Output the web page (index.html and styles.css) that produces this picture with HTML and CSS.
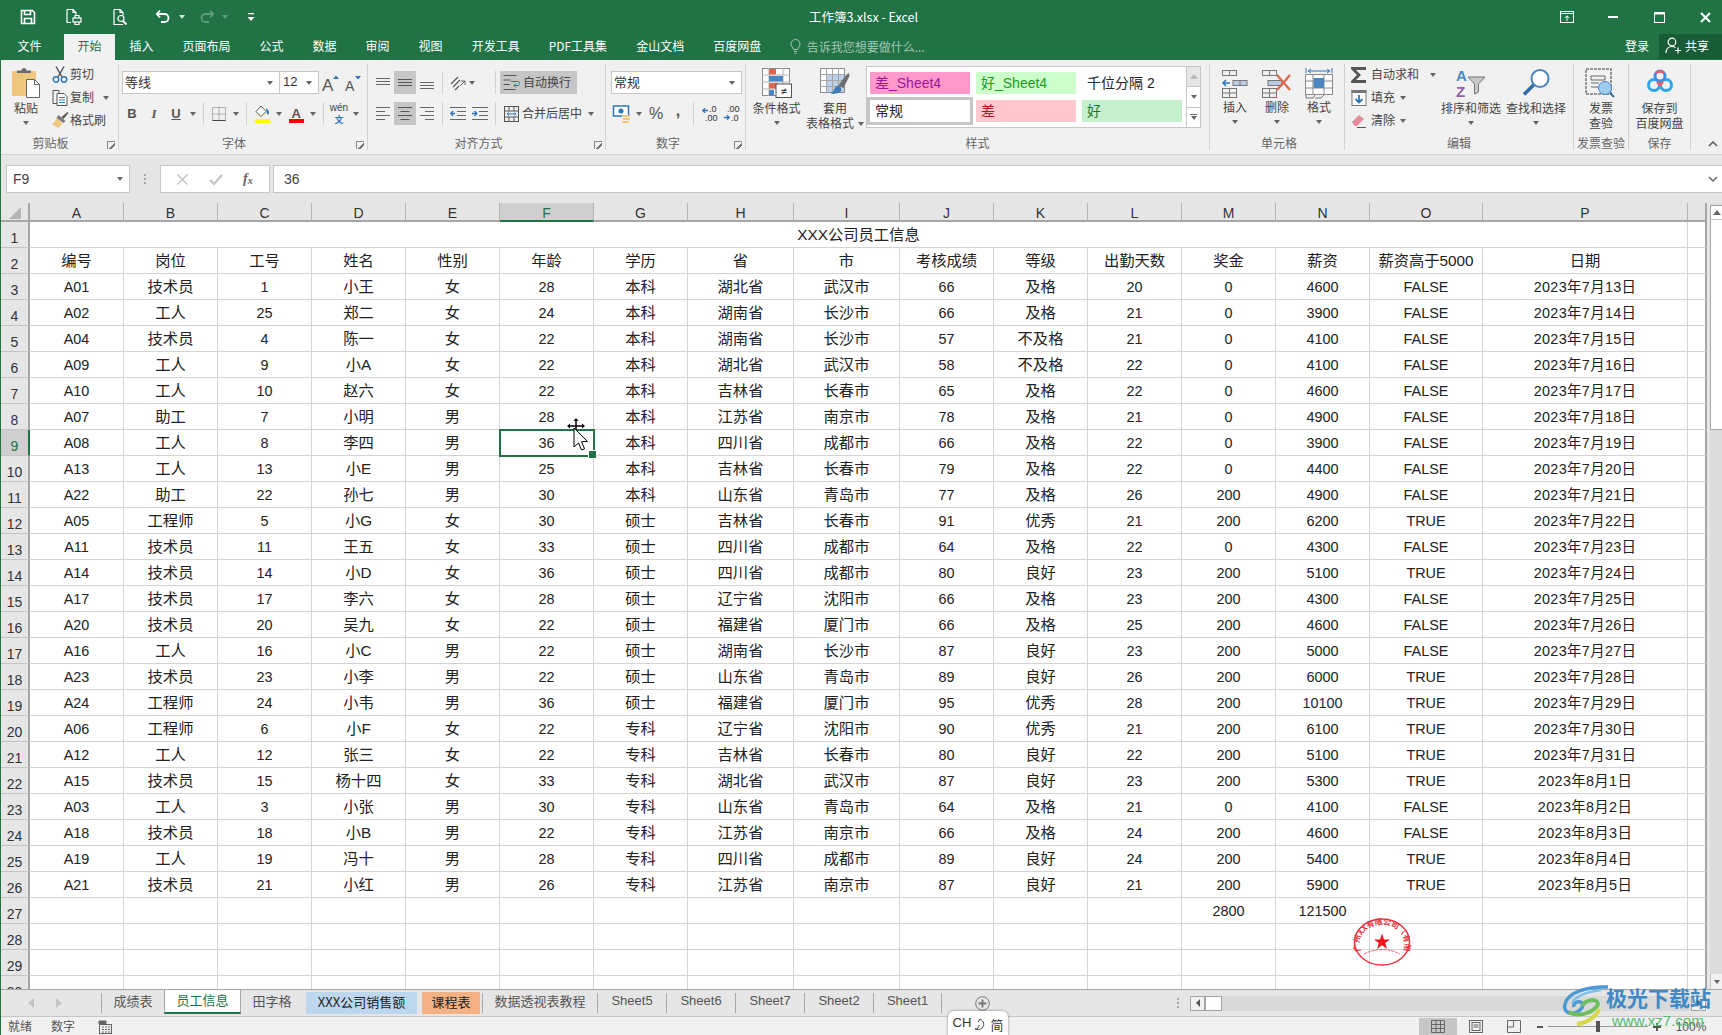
FILE: index.html
```html
<!DOCTYPE html>
<html lang="zh-CN">
<head>
<meta charset="utf-8">
<title>工作簿3.xlsx - Excel</title>
<link rel="stylesheet" href="styles.css">
</head>
<body>
<div class="app">

<header class="titlebar">
  <div class="qat">
    <span class="qb"><svg width="16" height="16" viewBox="0 0 16 16" fill="none" stroke="#fff" stroke-width="1.6"><path d="M1.5 1.5h11l2 2v11h-13z"/><path d="M4.5 1.5v4h6v-4M4.5 14.5v-5h7v5"/></svg></span>
    <span class="qb"><svg width="18" height="18" viewBox="0 0 18 18" fill="none" stroke="#fff" stroke-width="1.2"><path d="M2 1.5h6l3 3v3M2 1.5v13h4"/><path d="M8 1.5v3h3"/><rect x="8" y="10" width="8" height="4"/><path d="M10 10V7.500h4V10M10 14v2.500h4V14"/></svg></span>
    <span class="qb"><svg width="18" height="18" viewBox="0 0 18 18" fill="none" stroke="#fff" stroke-width="1.2"><path d="M3 1.500h6l3 3v3M3 1.500v15h9"/><path d="M9 1.500v3h3"/><circle cx="10" cy="10.500" r="3"/><path d="M12 13l3.500 3.500" stroke-width="1.800"/></svg></span>
    <span class="qb-undo"><svg width="16" height="16" viewBox="0 0 16 16" fill="none" stroke="#fff" stroke-width="1.800"><path d="M5 1.500L1.800 5 5 8.500"/><path d="M2 5h7.500a4 4 0 0 1 0 8H6"/></svg></span>
    <span class="caret caret-w"></span>
    <span class="qb-redo"><svg width="16" height="16" viewBox="0 0 16 16" fill="none" stroke="#5f9c7c" stroke-width="1.800"><path d="M11 1.500L14.200 5 11 8.500"/><path d="M14 5H6.500a4 4 0 0 0 0 8H10"/></svg></span>
    <span class="caret caret-dim"></span>
    <span class="qb-custom"><svg width="8" height="9" viewBox="0 0 8 9" fill="#fff"><rect x="1" y="0" width="6" height="1.300"/><path d="M0.500 4h7L4 8z"/></svg></span>
  </div>
  <div class="doc-title">工作簿3.xlsx - Excel</div>
  <div class="winctl">
    <span class="wb"><svg width="14" height="12" viewBox="0 0 14 12" fill="none" stroke="#fff"><rect x="0.500" y="0.500" width="13" height="11"/><path d="M0.500 2.500h13M7 10V5M4.800 7L7 4.800 9.200 7"/></svg></span>
    <span class="wb"><svg width="10" height="2" viewBox="0 0 10 2"><rect width="10" height="2" fill="#fff"/></svg></span>
    <span class="wb"><svg width="11" height="11" viewBox="0 0 11 11" fill="none" stroke="#fff"><rect x="0.500" y="0.500" width="10" height="10"/><path d="M0 1.500h11" stroke-width="2"/></svg></span>
    <span class="wb wb-close"><svg width="11" height="11" viewBox="0 0 11 11" stroke="#fff" stroke-width="2"><path d="M1 1l9 9M10 1l-9 9"/></svg></span>
  </div>
</header>

<nav class="menutabs">
  <span class="mt mt-file">文件</span>
  <span class="mt mt-on">开始</span>
  <span class="mt">插入</span>
  <span class="mt">页面布局</span>
  <span class="mt">公式</span>
  <span class="mt">数据</span>
  <span class="mt">审阅</span>
  <span class="mt">视图</span>
  <span class="mt">开发工具</span>
  <span class="mt">PDF工具集</span>
  <span class="mt">金山文档</span>
  <span class="mt">百度网盘</span>
  <span class="tellme"><svg width="11" height="15" viewBox="0 0 11 15" fill="none" stroke="#a8c8b6"><path d="M3.500 10.500C3 8.500 1 7.500 1 5a4.500 4.500 0 0 1 9 0c0 2.500-2 3.500-2.500 5.500zM4 12.500h3M4.500 14.300h2"/></svg>告诉我您想要做什么...</span>
  <span class="login">登录</span>
  <span class="share"><svg width="17" height="17" viewBox="0 0 17 17" fill="none" stroke="#fff" stroke-width="1.200"><circle cx="7" cy="5" r="3.800"/><path d="M1 16c0-4 2.500-6.500 6-6.500 1.500 0 2.500.4 3.500 1M10 13.500h6M13 10.500v6"/></svg>共享</span>
</nav>

<section class="ribbon">
  <div class="group g-clip">
    <div class="gbody">
      <div class="big big-paste">
        <svg class="bigicon" width="28" height="30" viewBox="0 0 28 30"><rect x="0" y="3" width="24" height="25" rx="1" fill="#f0c77f"/><path d="M5 5V2.500h4.500a2.500 2.500 0 0 1 5 0H19V5z" fill="#6b6b6b"/><path d="M14.500 11.500h8l5 5v13h-13z" fill="#fff" stroke="#666"/><path d="M22.500 11.500v5h5" fill="none" stroke="#666"/></svg>
        <span class="biglabel">粘贴</span>
        <span class="bigcaret"><span class="caret"></span></span>
      </div>
      <div class="smalls">
        <div class="sm"><svg class="smi" width="16" height="17" viewBox="0 0 16 17" fill="none"><path d="M4 0.500L10 11M12 0.500L6 11" stroke="#555" stroke-width="1.500"/><circle cx="4" cy="13.500" r="2.700" stroke="#2f75b5" stroke-width="1.400"/><circle cx="12" cy="13.500" r="2.700" stroke="#2f75b5" stroke-width="1.400"/></svg><span>剪切</span></div>
        <div class="sm"><svg class="smi" width="16" height="16" viewBox="0 0 16 16" fill="none" stroke="#555"><path d="M1 .5h6v13H1z"/><path d="M5 3.500h7l3 3v9H5z" fill="#fff"/><path d="M7 7.500h6M7 10h6M7 12.500h6" stroke="#2f75b5"/></svg><span>复制</span><span class="caret caret-sm"></span></div>
        <div class="sm"><svg class="smi" width="17" height="17" viewBox="0 0 17 17"><path d="M10 5l6-5 1 1-5 6z" fill="#595959"/><path d="M7 3l7 6-2 2-7-5z" fill="#7a7a7a"/><path d="M5 6l6 5-4 5-7-4c2 0 4-3 5-6z" fill="#f0c77f"/></svg><span>格式刷</span></div>
      </div>
    </div>
    <div class="glabel">剪贴板<span class="launch"></span></div>
  </div>

  <div class="group g-font">
    <div class="gbody rows">
      <div class="row">
        <span class="combo c-font">等线<span class="caret"></span></span>
        <span class="combo c-size">12<span class="caret"></span></span>
        <span class="ic"><svg width="22" height="20" viewBox="0 0 22 20"><text x="3" y="18" class="icontext">A</text><path d="M14 6l3-3.500L20 6z" fill="#2f75b5"/></svg></span>
        <span class="ic"><svg width="22" height="20" viewBox="0 0 22 20"><text x="4" y="18" class="icontext-s">A</text><path d="M14 3l3 3.500L20 3z" fill="#2f75b5"/></svg></span>
      </div>
      <div class="row row-tight">
        <span class="ic fmt fmt-b">B</span>
        <span class="ic fmt fmt-i">I</span>
        <span class="ic fmt fmt-u">U</span>
        <span class="car"><span class="caret"></span></span>
        <span class="sep"></span>
        <span class="ic"><svg width="14" height="14" viewBox="0 0 14 14" fill="none" stroke="#777" stroke-dasharray="1 1"><path d="M.5.500h13v13H.5zM7 .5v13M.5 7h13"/><path d="M.5 13.500h13" stroke="#444" stroke-dasharray="none"/></svg></span>
        <span class="car"><span class="caret"></span></span>
        <span class="sep"></span>
        <span class="ic"><svg width="17" height="18" viewBox="0 0 17 18"><path d="M7 1l5 5.500-5 5-5-5z" fill="#fff" stroke="#555"/><path d="M12 3c2 1 3 3 3 5 0 1-1 2-2 1z" fill="#2f75b5"/><rect x="1" y="14" width="15" height="4" fill="#ffff00"/></svg></span>
        <span class="car"><span class="caret"></span></span>
        <span class="ic"><svg width="17" height="18" viewBox="0 0 17 18"><text x="3.500" y="12.500" class="icontext-a">A</text><rect x="1" y="14" width="15" height="4" fill="#ff0000"/></svg></span>
        <span class="car"><span class="caret"></span></span>
        <span class="sep"></span>
        <span class="ic wen"><i>wén</i><b>文</b></span>
        <span class="car"><span class="caret"></span></span>
      </div>
    </div>
    <div class="glabel">字体<span class="launch"></span></div>
  </div>

  <div class="group g-align">
    <div class="gbody rows">
      <div class="row">
        <span class="ic"><svg width="14" height="10" viewBox="0 0 14 10" stroke="#666"><path d="M0 .5h14M0 3.500h14M0 6.500h14"/></svg></span>
        <span class="ic ic-on"><svg width="14" height="8" viewBox="0 0 14 8" stroke="#555"><path d="M0 .5h14M0 3.500h14M0 6.500h14"/></svg></span>
        <span class="ic"><svg class="down4" width="14" height="8" viewBox="0 0 14 8" stroke="#666"><path d="M0 .5h14M0 3.500h14M0 6.500h14"/></svg></span>
        <span class="sep"></span>
        <span class="ic2"><svg width="16" height="16" viewBox="0 0 16 16" fill="none" stroke="#555"><path d="M1 9l7-7M3 12l7-7M5 15l4-4" stroke-width="1.200"/><path d="M10 11l5-5M15 6v4M15 6h-4" stroke="#666"/></svg><span class="caret"></span></span>
        <span class="sep"></span>
        <span class="wrap-btn"><svg width="17" height="18" viewBox="0 0 17 18" fill="none" stroke="#555"><path d="M.5 1.500h13M.5 6h7M.5 10.500h6M.5 15.500h12"/><path d="M8 7.500h7c2 0 2 4 0 4h-4M13 9.500l-2 2 2 2" stroke="#2f75b5"/></svg><span class="raise">自动换行</span></span>
      </div>
      <div class="row">
        <span class="ic"><svg width="14" height="13" viewBox="0 0 14 13" stroke="#666"><path d="M0 .5h14M0 4.500h9M0 8.500h14M0 12.500h9"/></svg></span>
        <span class="ic ic-on"><svg width="14" height="13" viewBox="0 0 14 13" stroke="#555"><path d="M0 .5h14M2.500 4.500h9M0 8.500h14M2.500 12.500h9"/></svg></span>
        <span class="ic"><svg width="14" height="13" viewBox="0 0 14 13" stroke="#666"><path d="M0 .5h14M5 4.500h9M0 8.500h14M5 12.500h9"/></svg></span>
        <span class="sep"></span>
        <span class="ic"><svg width="16" height="13" viewBox="0 0 16 13" fill="none" stroke="#666"><path d="M0 .5h16M7 4.500h9M7 8.500h9M0 12.500h16"/><path d="M5 6.500H1M3 4L.8 6.500 3 9" stroke="#2f75b5" stroke-width="1.300"/></svg></span>
        <span class="ic"><svg width="16" height="13" viewBox="0 0 16 13" fill="none" stroke="#666"><path d="M0 .5h16M7 4.500h9M7 8.500h9M0 12.500h16"/><path d="M0 6.500h4M2.500 4L4.800 6.500 2.500 9" stroke="#2f75b5" stroke-width="1.300"/></svg></span>
        <span class="sep"></span>
        <span class="merge"><svg width="15" height="16" viewBox="0 0 15 16" fill="none" stroke="#555"><rect x=".5" y=".5" width="14" height="15"/><path d="M.5 5h14M.5 11h14M5 .5V5M10 .5V5M5 11v5M10 11v5"/><path d="M3 8h9M4.500 6.500L3 8l1.500 1.500M10.500 6.500L12 8l-1.500 1.500" stroke="#2f75b5"/></svg><span class="merge-t raise">合并后居中</span><span class="caret"></span></span>
      </div>
    </div>
    <div class="glabel">对齐方式<span class="launch"></span></div>
  </div>

  <div class="group g-num">
    <div class="gbody rows">
      <div class="row"><span class="combo c-num">常规<span class="caret"></span></span></div>
      <div class="row">
        <span class="ic"><svg width="18" height="18" viewBox="0 0 18 18"><rect x="0.500" y="1" width="15" height="10" fill="#fff" stroke="#2f75b5" stroke-width="1.500"/><circle cx="8" cy="6" r="2.500" fill="#2f75b5"/><rect x="9" y="10" width="7" height="2" fill="#f0c77f"/><rect x="10" y="13" width="7" height="2" fill="#f0c77f"/><rect x="9" y="16" width="7" height="2" fill="#f0c77f"/></svg></span>
        <span class="car"><span class="caret"></span></span>
        <span class="ic pct">%</span>
        <span class="ic pct comma">,</span>
        <span class="sep"></span>
        <span class="ic decs"><svg width="15" height="14" viewBox="0 0 15 14" fill="none"><path d="M6 3.500H1M3 1.300L.8 3.500 3 5.700" stroke="#2f75b5" stroke-width="1.300"/></svg><i class="dec1">.0</i><i class="dec2">.00</i></span>
        <span class="ic decs"><svg width="15" height="14" viewBox="0 0 15 14" fill="none"><path d="M0 10.500h5M3 8.300l2.200 2.200L3 12.700" stroke="#2f75b5" stroke-width="1.300"/></svg><i class="dec3">.00</i><i class="dec4">.0</i></span>
      </div>
    </div>
    <div class="glabel">数字<span class="launch"></span></div>
  </div>

  <div class="group g-style">
    <div class="gbody">
      <div class="big big-cf">
        <svg class="bigicon" width="30" height="30" viewBox="0 0 30 30"><rect x=".5" y=".5" width="27" height="27" fill="#fff" stroke="#8a8a8a"/><path d="M0 7h28M0 14h28M0 21h28M7 0v28M21 0v28" stroke="#b5b5b5"/><rect x="7" y="1" width="7" height="5.500" fill="#d9694a"/><rect x="7" y="8" width="14" height="5.500" fill="#4a86c0"/><rect x="7" y="15" width="9" height="5.500" fill="#d9694a"/><rect x="7" y="22" width="5" height="5.500" fill="#4a86c0"/><rect x="14" y="16" width="15.500" height="13.500" fill="#fff" stroke="#555"/><text x="21.800" y="26.500" class="neq">≠</text></svg>
        <span class="biglabel">条件格式</span>
        <span class="bigcaret"><span class="caret"></span></span>
      </div>
      <div class="big big-tf">
        <svg class="bigicon" width="30" height="30" viewBox="0 0 30 30"><rect x=".5" y=".5" width="24" height="24" fill="#fff" stroke="#8a8a8a"/><rect x="7" y="7" width="17" height="17" fill="#bcd1e8"/><path d="M0 6.500h25M0 12.500h25M0 18.500h25M6.500 0v25M12.500 0v25M18.500 0v25" stroke="#a5a5a5"/><path d="M18 18l8-11 3-2 .5 3-6 12z" fill="#6e6e6e"/><path d="M17 18c3 0 5 2 4 5-1 2-5 3-10 3 3-2 3-7 6-8z" fill="#3c7cb8"/></svg>
        <span class="biglabel">套用<br>表格格式<span class="caret inl"></span></span>
      </div>
      <div class="gallery">
        <div class="gcells">
          <span class="st st-pink">差_Sheet4</span>
          <span class="st st-lgreen">好_Sheet4</span>
          <span class="st st-plain">千位分隔 2</span>
          <span class="st st-norm">常规</span>
          <span class="st st-bad">差</span>
          <span class="st st-good">好</span>
        </div>
        <div class="gscroll">
          <span class="gs gs-dim"><i class="up"></i></span>
          <span class="gs"><span class="caret"></span></span>
          <span class="gs gs-more"><span class="caret"></span></span>
        </div>
      </div>
    </div>
    <div class="glabel">样式</div>
  </div>

  <div class="group g-cells">
    <div class="gbody">
      <div class="big big-c">
        <svg class="bigicon" width="28" height="30" viewBox="0 0 28 30" fill="none" stroke="#777"><rect x="1.500" y="2.500" width="14" height="5"/><path d="M8.500 2.500v5"/><rect x="12" y="12.500" width="14" height="5" fill="#b8cce4"/><path d="M19 12.500v5"/><path d="M9 15H2M5 12l-3 3 3 3" stroke="#2f75b5" stroke-width="1.500"/><rect x="1.500" y="20.500" width="14" height="9"/><path d="M8.500 20.500v9M1.500 25h14"/></svg>
        <span class="biglabel">插入</span>
        <span class="bigcaret"><span class="caret"></span></span>
      </div>
      <div class="big big-c">
        <svg class="bigicon" width="32" height="30" viewBox="0 0 32 30" fill="none" stroke="#777"><rect x="1.500" y="2.500" width="14" height="5"/><path d="M8.500 2.500v5"/><rect x="7" y="12.500" width="14" height="5" fill="#b8cce4"/><rect x="1.500" y="20.500" width="14" height="9"/><path d="M8.500 20.500v9M1.500 25h14"/><path d="M16 7l13 15M29 7L16 22" stroke="#d9694a" stroke-width="2.200"/></svg>
        <span class="biglabel">删除</span>
        <span class="bigcaret"><span class="caret"></span></span>
      </div>
      <div class="big big-c">
        <svg class="bigicon" width="28" height="30" viewBox="0 0 28 30" fill="none" stroke="#8a8a8a"><path d="M1 0v5M27 0v5" stroke="#2f75b5"/><path d="M3 3h22M6 1L3 3l3 2M22 1l3 2-3 2" stroke="#2f75b5"/><rect x=".5" y="6.500" width="27" height="20" fill="#fff"/><path d="M0 13h28M0 20h28M8 6v21M19 6v21"/><rect x="8.500" y="10" width="10.500" height="10" fill="#4a86c0" stroke="none"/><path d="M1 27v3h7l2-3M10 30h6l3-3" stroke="#777"/></svg>
        <span class="biglabel">格式</span>
        <span class="bigcaret"><span class="caret"></span></span>
      </div>
    </div>
    <div class="glabel">单元格</div>
  </div>

  <div class="group g-edit">
    <div class="gbody">
      <div class="smalls smalls-edit">
        <div class="sm"><svg class="smi2" width="16" height="16" viewBox="0 0 16 16"><path d="M0 0h15v3H5l5 5-5 5h10v3H0v-2l6-6-6-6z" fill="#555"/></svg><span>自动求和</span><span class="caret caret-e1"></span></div>
        <div class="sm"><svg class="smi2" width="15" height="16" viewBox="0 0 15 16" fill="none"><rect x=".5" y=".5" width="14" height="15" fill="#fff" stroke="#777"/><rect x="0" y="0" width="15" height="3" fill="#777"/><path d="M7.500 5v7M4 9l3.500 3.500L11 9" stroke="#2f75b5" stroke-width="1.800"/></svg><span>填充</span><span class="caret caret-e2"></span></div>
        <div class="sm"><svg class="smi2" width="16" height="14" viewBox="0 0 16 14"><path d="M1 8l7-7 5 4-7 7H3.500z" fill="#e58a9b"/><path d="M6 13.500h9" stroke="#555" fill="none"/></svg><span>清除</span><span class="caret caret-e2"></span></div>
      </div>
      <div class="big big-sort">
        <svg class="bigicon" width="30" height="30" viewBox="0 0 30 30"><text x="0" y="13" class="az az-a">A</text><text x="0" y="29" class="az az-z">Z</text><path d="M12 9h17l-6.500 7v8l-4 2V16z" fill="#c9c9c9" stroke="#777"/></svg>
        <span class="biglabel">排序和筛选</span>
        <span class="bigcaret"><span class="caret"></span></span>
      </div>
      <div class="big big-find">
        <svg class="bigicon" width="28" height="30" viewBox="0 0 28 30" fill="none"><circle cx="18" cy="10.500" r="8.500" fill="#fff" stroke="#4a86c0" stroke-width="2"/><path d="M11.500 17L2 26.500" stroke="#2f6ca8" stroke-width="3.500"/></svg>
        <span class="biglabel">查找和选择</span>
        <span class="bigcaret"><span class="caret"></span></span>
      </div>
    </div>
    <div class="glabel">编辑</div>
  </div>

  <div class="group g-inv">
    <div class="gbody">
      <div class="big big-inv">
        <svg class="bigicon" width="32" height="30" viewBox="0 0 32 30" fill="none"><rect x="1" y="1" width="25" height="25" fill="#f3f3f3" stroke="#777" stroke-width="1.500" stroke-dasharray="3 1"/><path d="M6 8h14v4H6zM6 15h8M6 19h7" stroke="#666"/><circle cx="20" cy="20" r="6.500" fill="#9ecbf0" stroke="#4a86c0"/><path d="M25 25l4 4" stroke="#2f6ca8" stroke-width="2"/></svg>
        <span class="biglabel">发票<br>查验</span>
      </div>
    </div>
    <div class="glabel">发票查验</div>
  </div>

  <div class="group g-save">
    <div class="gbody">
      <div class="big big-save">
        <svg class="bigicon" width="28" height="30" viewBox="0 0 28 30" fill="none"><circle cx="8" cy="17" r="5.500" stroke="#2fa4e7" stroke-width="3"/><circle cx="20" cy="17" r="5.500" stroke="#2fa4e7" stroke-width="3"/><circle cx="14" cy="8" r="5" stroke="#3d8fe0" stroke-width="3"/><path d="M10 5a6 6 0 0 1 8 0" stroke="#ee5a6f" stroke-width="3"/><path d="M11 14l3 3 3-3" stroke="#ee5a6f" stroke-width="2.500"/></svg>
        <span class="biglabel">保存到<br>百度网盘</span>
      </div>
    </div>
    <div class="glabel">保存</div>
  </div>

  <svg class="collapse" width="10" height="6" viewBox="0 0 10 6" fill="none" stroke="#555" stroke-width="1.500"><path d="M1 5l4-4 4 4"/></svg>
</section>

<section class="fbar">
  <div class="namebox">F9<span class="caret"></span></div>
  <div class="dots"><i></i><i></i><i></i></div>
  <div class="fxbox">
    <svg width="11" height="11" viewBox="0 0 11 11" stroke="#c4c4c4" stroke-width="1.500"><path d="M.5.5l10 10M10.500.5l-10 10"/></svg>
    <svg width="14" height="11" viewBox="0 0 14 11" fill="none" stroke="#c4c4c4" stroke-width="2.200"><path d="M1 6l4 4 8-9"/></svg>
    <span class="fx">f<sub>x</sub></span>
  </div>
  <div class="finput">36<svg class="fexpand" width="10" height="6" viewBox="0 0 10 6" fill="none" stroke="#666" stroke-width="1.500"><path d="M1 1l4 4 4-4"/></svg></div>
</section>

<section class="sheet">
  <div class="gridwrap">
    <table class="grid">
      <colgroup><col class="c-rh"><col class="c94" span="7"><col class="c106" span="2"><col class="c94" span="5"><col class="c113"><col class="c205"><col class="c-end"></colgroup>
      <thead><tr><th class="corner"><svg width="14" height="14" viewBox="0 0 14 14"><path d="M13 1v12H1z" fill="#b4b4b4"/></svg></th><th>A</th><th>B</th><th>C</th><th>D</th><th>E</th><th class="col-on">F</th><th>G</th><th>H</th><th>I</th><th>J</th><th>K</th><th>L</th><th>M</th><th>N</th><th>O</th><th>P</th><th></th></tr></thead>
      <tbody>
<tr><th>1</th><td colspan="16">XXX公司员工信息</td><td></td></tr>
<tr><th>2</th><td>编号</td><td>岗位</td><td>工号</td><td>姓名</td><td>性别</td><td>年龄</td><td>学历</td><td>省</td><td>市</td><td>考核成绩</td><td>等级</td><td>出勤天数</td><td>奖金</td><td>薪资</td><td>薪资高于5000</td><td>日期</td><td></td></tr>
<tr><th>3</th><td>A01</td><td>技术员</td><td>1</td><td>小王</td><td>女</td><td>28</td><td>本科</td><td>湖北省</td><td>武汉市</td><td>66</td><td>及格</td><td>20</td><td>0</td><td>4600</td><td>FALSE</td><td class="date">2023年7月13日</td><td></td></tr>
<tr><th>4</th><td>A02</td><td>工人</td><td>25</td><td>郑二</td><td>女</td><td>24</td><td>本科</td><td>湖南省</td><td>长沙市</td><td>66</td><td>及格</td><td>21</td><td>0</td><td>3900</td><td>FALSE</td><td class="date">2023年7月14日</td><td></td></tr>
<tr><th>5</th><td>A04</td><td>技术员</td><td>4</td><td>陈一</td><td>女</td><td>22</td><td>本科</td><td>湖南省</td><td>长沙市</td><td>57</td><td>不及格</td><td>21</td><td>0</td><td>4100</td><td>FALSE</td><td class="date">2023年7月15日</td><td></td></tr>
<tr><th>6</th><td>A09</td><td>工人</td><td>9</td><td>小A</td><td>女</td><td>22</td><td>本科</td><td>湖北省</td><td>武汉市</td><td>58</td><td>不及格</td><td>22</td><td>0</td><td>4100</td><td>FALSE</td><td class="date">2023年7月16日</td><td></td></tr>
<tr><th>7</th><td>A10</td><td>工人</td><td>10</td><td>赵六</td><td>女</td><td>22</td><td>本科</td><td>吉林省</td><td>长春市</td><td>65</td><td>及格</td><td>22</td><td>0</td><td>4600</td><td>FALSE</td><td class="date">2023年7月17日</td><td></td></tr>
<tr><th>8</th><td>A07</td><td>助工</td><td>7</td><td>小明</td><td>男</td><td>28</td><td>本科</td><td>江苏省</td><td>南京市</td><td>78</td><td>及格</td><td>21</td><td>0</td><td>4900</td><td>FALSE</td><td class="date">2023年7月18日</td><td></td></tr>
<tr><th class="row-on">9</th><td>A08</td><td>工人</td><td>8</td><td>李四</td><td>男</td><td class="sel">36</td><td>本科</td><td>四川省</td><td>成都市</td><td>66</td><td>及格</td><td>22</td><td>0</td><td>3900</td><td>FALSE</td><td class="date">2023年7月19日</td><td></td></tr>
<tr><th>10</th><td>A13</td><td>工人</td><td>13</td><td>小E</td><td>男</td><td>25</td><td>本科</td><td>吉林省</td><td>长春市</td><td>79</td><td>及格</td><td>22</td><td>0</td><td>4400</td><td>FALSE</td><td class="date">2023年7月20日</td><td></td></tr>
<tr><th>11</th><td>A22</td><td>助工</td><td>22</td><td>孙七</td><td>男</td><td>30</td><td>本科</td><td>山东省</td><td>青岛市</td><td>77</td><td>及格</td><td>26</td><td>200</td><td>4900</td><td>FALSE</td><td class="date">2023年7月21日</td><td></td></tr>
<tr><th>12</th><td>A05</td><td>工程师</td><td>5</td><td>小G</td><td>女</td><td>30</td><td>硕士</td><td>吉林省</td><td>长春市</td><td>91</td><td>优秀</td><td>21</td><td>200</td><td>6200</td><td>TRUE</td><td class="date">2023年7月22日</td><td></td></tr>
<tr><th>13</th><td>A11</td><td>技术员</td><td>11</td><td>王五</td><td>女</td><td>33</td><td>硕士</td><td>四川省</td><td>成都市</td><td>64</td><td>及格</td><td>22</td><td>0</td><td>4300</td><td>FALSE</td><td class="date">2023年7月23日</td><td></td></tr>
<tr><th>14</th><td>A14</td><td>技术员</td><td>14</td><td>小D</td><td>女</td><td>36</td><td>硕士</td><td>四川省</td><td>成都市</td><td>80</td><td>良好</td><td>23</td><td>200</td><td>5100</td><td>TRUE</td><td class="date">2023年7月24日</td><td></td></tr>
<tr><th>15</th><td>A17</td><td>技术员</td><td>17</td><td>李六</td><td>女</td><td>28</td><td>硕士</td><td>辽宁省</td><td>沈阳市</td><td>66</td><td>及格</td><td>23</td><td>200</td><td>4300</td><td>FALSE</td><td class="date">2023年7月25日</td><td></td></tr>
<tr><th>16</th><td>A20</td><td>技术员</td><td>20</td><td>吴九</td><td>女</td><td>22</td><td>硕士</td><td>福建省</td><td>厦门市</td><td>66</td><td>及格</td><td>25</td><td>200</td><td>4600</td><td>FALSE</td><td class="date">2023年7月26日</td><td></td></tr>
<tr><th>17</th><td>A16</td><td>工人</td><td>16</td><td>小C</td><td>男</td><td>22</td><td>硕士</td><td>湖南省</td><td>长沙市</td><td>87</td><td>良好</td><td>23</td><td>200</td><td>5000</td><td>FALSE</td><td class="date">2023年7月27日</td><td></td></tr>
<tr><th>18</th><td>A23</td><td>技术员</td><td>23</td><td>小李</td><td>男</td><td>22</td><td>硕士</td><td>山东省</td><td>青岛市</td><td>89</td><td>良好</td><td>26</td><td>200</td><td>6000</td><td>TRUE</td><td class="date">2023年7月28日</td><td></td></tr>
<tr><th>19</th><td>A24</td><td>工程师</td><td>24</td><td>小韦</td><td>男</td><td>36</td><td>硕士</td><td>福建省</td><td>厦门市</td><td>95</td><td>优秀</td><td>28</td><td>200</td><td>10100</td><td>TRUE</td><td class="date">2023年7月29日</td><td></td></tr>
<tr><th>20</th><td>A06</td><td>工程师</td><td>6</td><td>小F</td><td>女</td><td>22</td><td>专科</td><td>辽宁省</td><td>沈阳市</td><td>90</td><td>优秀</td><td>21</td><td>200</td><td>6100</td><td>TRUE</td><td class="date">2023年7月30日</td><td></td></tr>
<tr><th>21</th><td>A12</td><td>工人</td><td>12</td><td>张三</td><td>女</td><td>22</td><td>专科</td><td>吉林省</td><td>长春市</td><td>80</td><td>良好</td><td>22</td><td>200</td><td>5100</td><td>TRUE</td><td class="date">2023年7月31日</td><td></td></tr>
<tr><th>22</th><td>A15</td><td>技术员</td><td>15</td><td>杨十四</td><td>女</td><td>33</td><td>专科</td><td>湖北省</td><td>武汉市</td><td>87</td><td>良好</td><td>23</td><td>200</td><td>5300</td><td>TRUE</td><td class="date">2023年8月1日</td><td></td></tr>
<tr><th>23</th><td>A03</td><td>工人</td><td>3</td><td>小张</td><td>男</td><td>30</td><td>专科</td><td>山东省</td><td>青岛市</td><td>64</td><td>及格</td><td>21</td><td>0</td><td>4100</td><td>FALSE</td><td class="date">2023年8月2日</td><td></td></tr>
<tr><th>24</th><td>A18</td><td>技术员</td><td>18</td><td>小B</td><td>男</td><td>22</td><td>专科</td><td>江苏省</td><td>南京市</td><td>66</td><td>及格</td><td>24</td><td>200</td><td>4600</td><td>FALSE</td><td class="date">2023年8月3日</td><td></td></tr>
<tr><th>25</th><td>A19</td><td>工人</td><td>19</td><td>冯十</td><td>男</td><td>28</td><td>专科</td><td>四川省</td><td>成都市</td><td>89</td><td>良好</td><td>24</td><td>200</td><td>5400</td><td>TRUE</td><td class="date">2023年8月4日</td><td></td></tr>
<tr><th>26</th><td>A21</td><td>技术员</td><td>21</td><td>小红</td><td>男</td><td>26</td><td>专科</td><td>江苏省</td><td>南京市</td><td>87</td><td>良好</td><td>21</td><td>200</td><td>5900</td><td>TRUE</td><td class="date">2023年8月5日</td><td></td></tr>
<tr><th>27</th><td></td><td></td><td></td><td></td><td></td><td></td><td></td><td></td><td></td><td></td><td></td><td></td><td>2800</td><td>121500</td><td></td><td></td><td></td></tr>
<tr><th>28</th><td></td><td></td><td></td><td></td><td></td><td></td><td></td><td></td><td></td><td></td><td></td><td></td><td></td><td></td><td></td><td></td><td></td></tr>
<tr><th>29</th><td></td><td></td><td></td><td></td><td></td><td></td><td></td><td></td><td></td><td></td><td></td><td></td><td></td><td></td><td></td><td></td><td></td></tr>
<tr><th>30</th><td></td><td></td><td></td><td></td><td></td><td></td><td></td><td></td><td></td><td></td><td></td><td></td><td></td><td></td><td></td><td></td><td></td></tr>
      </tbody>
    </table>
  </div>
  <div class="vscroll">
    <span class="vbtn"><i class="up"></i></span>
    <span class="vthumb"></span>
    <span class="vtrack"></span>
    <span class="vbtn vbtn-b"><span class="caret"></span></span>
  </div>

  <svg class="stamp" width="58" height="50" viewBox="0 0 58 50">
    <defs><path id="arc" d="M8 34A22.500 19.500 0 1 1 50 34"/></defs>
    <ellipse cx="29" cy="25" rx="27.500" ry="23" fill="none" stroke="#f03040" stroke-width="1.500"/>
    <text class="stamp-t"><textPath href="#arc" startOffset="0">广州XX有限公司（有限合伙）</textPath></text>
    <path d="M29 16.500l2 5.900h6.100l-4.900 3.600 1.800 5.900-5-3.600-5 3.600 1.800-5.900-4.900-3.600h6.100z" fill="#f5141e"/>
    <path d="M11 37q18-9 36 0" fill="none" stroke="#f03040" stroke-width=".8" stroke-dasharray="3 1"/>
  </svg>

  <svg class="cursor" width="24" height="34" viewBox="0 0 24 34">
    <path d="M12 1v14M5 8h14" stroke="#000" stroke-width="1.500"/>
    <path d="M12 0l2.500 3h-5zM12 16l-2.500-3h5zM3 8l3-2.500v5zM21 8l-3-2.500v5z" fill="#000"/>
    <path d="M10 10v19l4.500-4 3 7 3-1.300-3-7 6-.3z" fill="#fff" stroke="#000"/>
  </svg>
</section>

<section class="sheetbar">
  <div class="nav">
    <svg width="6" height="10" viewBox="0 0 6 10"><path d="M6 0v10L0 5z" fill="#c4c4c4"/></svg>
    <svg width="6" height="10" viewBox="0 0 6 10"><path d="M0 0v10l6-5z" fill="#c4c4c4"/></svg>
  </div>
  <span class="tab">成绩表</span>
  <span class="tab tab-on">员工信息</span>
  <span class="tab">田字格</span>
  <span class="tab tab-blue">XXX公司销售额</span>
  <span class="tab tab-orange">课程表</span>
  <span class="tab">数据透视表教程</span>
  <span class="tab tab-s">Sheet5</span>
  <span class="tab tab-s">Sheet6</span>
  <span class="tab tab-s">Sheet7</span>
  <span class="tab tab-s">Sheet2</span>
  <span class="tab tab-s">Sheet1</span>
  <svg class="addsheet" width="15" height="15" viewBox="0 0 15 15" fill="none" stroke="#777"><circle cx="7.500" cy="7.500" r="6.800"/><path d="M7.500 3.500v8M3.500 7.500h8" stroke-width="1.800"/></svg>
  <div class="hscroll">
    <div class="dots dots-h"><i></i><i></i><i></i></div>
    <span class="hbtn"><i class="left"></i></span>
    <span class="hthumb"></span>
    <span class="htrack"></span>
    <span class="hbtn"><i class="right"></i></span>
  </div>
</section>

<footer class="status">
  <span class="st-txt">就绪</span>
  <span class="st-txt">数字</span>
  <svg class="st-ico" width="13" height="14" viewBox="0 0 13 14" fill="none" stroke="#666"><path d="M0 1h7v3H0z" fill="#666"/><rect x=".5" y="4.500" width="12" height="9"/><path d="M3 7h8M3 9.500h8M3 12h8" stroke-dasharray="2 1"/></svg>
  <div class="st-right">
    <span class="view view-on"><svg width="14" height="13" viewBox="0 0 14 13" fill="none" stroke="#666"><path d="M.5.500h13v12H.5zM.5 4.500h13M.5 8.500h13M5 .5v12M9.500.5v12"/></svg></span>
    <span class="view"><svg width="14" height="13" viewBox="0 0 14 13" fill="none" stroke="#666"><rect x=".5" y=".5" width="13" height="12"/><rect x="3" y="2.500" width="8" height="8"/><path d="M4.500 5h5M4.500 7h5"/></svg></span>
    <span class="view"><svg width="14" height="13" viewBox="0 0 14 13" fill="none" stroke="#666"><path d="M.5.500h13v12H.5zM.5 7h6V.5"/></svg></span>
    <span class="zminus"></span>
    <span class="slider"><i class="sthumb"></i></span>
    <span class="zplus"></span>
    <span class="zpct">100%</span>
  </div>
</footer>

<div class="ime">CH<svg width="13" height="13" viewBox="0 0 13 13" fill="none" stroke="#444"><path d="M6 1c4 2 5 6 2 9-2 2-5 2-7 1 3 0 4-2 4-4M4 4l2-3"/></svg>简</div>

<div class="watermark">
  <svg width="46" height="40" viewBox="0 0 46 40" fill="none">
    <path d="M45 1C25 0 5 6 2 18c-2 8 5 11 12 8 6-3 8-9 3-10-4-1-7 2-6 5" stroke="#4a9ad4" stroke-width="3.500"/>
    <path d="M38 4C24 6 12 10 9 17" stroke="#7fc0e8" stroke-width="2.500"/>
    <path d="M6 26c8 5 22 2 28-6 2-3 0-6-5-6-5 1-9 3-10 6" stroke="#6fbf60" stroke-width="4"/>
    <path d="M14 38c10-1 20-8 22-15" stroke="#d8d84a" stroke-width="4"/>
  </svg>
  <div class="wm-t"><b>极光下载站</b><span>www.xz7.com</span></div>
</div>

</div>
</body>
</html>
```
FILE: styles.css
```css
* { box-sizing: border-box; }
html, body { margin: 0; padding: 0; }
body { width: 1722px; height: 1035px; overflow: hidden; background: #f1f1f1; font-family: "Noto Sans CJK SC", "Liberation Sans", sans-serif; font-size: 12px; color: #444; }
i { font-style: normal; }
svg { overflow: visible; }
.app { position: relative; width: 1722px; height: 1035px; display: flex; flex-direction: column; border-left: 1px solid #217346; overflow: hidden; }

/* caret */
.caret { display: inline-block; width: 0; height: 0; border-left: 3.5px solid transparent; border-right: 3.5px solid transparent; border-top: 4px solid #666; flex: none; }

/* title bar */
.titlebar { height: 34px; flex: none; background: #217346; display: grid; grid-template-columns: 1fr auto 1fr; align-items: center; color: #fff; }
.qat { display: flex; align-items: center; padding-left: 4px; }
.qat span { display: flex; align-items: center; justify-content: center; }
.qb { width: 46px; }
.qb-undo { width: 30px; margin-left: 5px; }
.qb-redo { width: 30px; margin-left: 6px; }
.qb-custom { width: 24px; margin-left: 11px; }
.qat .caret { width: 0; border-top-color: #d5e6dc; }
.caret-w { margin: 0 1px 0 1px; }
.qat .caret-dim { border-top-color: #5f9c7c; }
.doc-title { font-size: 12.5px; color: #fff; padding-left: 4px; padding-bottom: 1px; }
.winctl { display: flex; justify-content: flex-end; align-items: center; }
.wb { width: 46px; height: 34px; display: flex; align-items: center; justify-content: center; }
.wb-close { width: 34px; margin-left: 6px; }

/* menu tabs */
.menutabs { height: 26px; flex: none; background: #217346; display: flex; padding-left: 2px; color: #fff; }
.mt { padding: 0 14.5px 2px; display: flex; align-items: center; font-size: 12px; line-height: 1; white-space: nowrap; }
.mt-file { margin-right: 8px; }
.mt-on { background: #f1f1f1; color: #217346; padding: 0 13.5px 2px; }
.tellme { display: flex; align-items: center; gap: 6px; margin-left: 14px; color: #a3c6b3; font-size: 12px; padding-bottom: 2px; }
.login { margin-left: auto; display: flex; align-items: center; padding: 0 10px 4px 0; width: 34px; white-space: nowrap; }
.share { width: 63px; height: 25px; background: #185c37; display: flex; align-items: center; gap: 3px; padding: 0 0 3px 6px; }

/* ribbon */
.ribbon { height: 95px; flex: none; background: #f1f1f1; border-bottom: 1px solid #d2d2d2; display: flex; padding-top: 4px; }
.group { height: 86px; border-right: 1px solid #d2d2d2; display: flex; flex-direction: column; flex: none; }
.gbody { height: 71px; display: flex; flex: none; }
.glabel { position: relative; height: 15px; line-height: 15px; text-align: center; color: #666; font-size: 12px; white-space: nowrap; }
.launch { position: absolute; right: 3px; bottom: 1px; width: 8px; height: 8px; border-left: 1px solid #8a8a8a; border-top: 1px solid #8a8a8a; background: linear-gradient(135deg, transparent 55%, #777 55%, #777 75%, transparent 75%); }
.g-clip { width: 118px; }
.g-clip .glabel { padding-right: 18px; }
.g-font { width: 249px; padding-left: 3px; }
.g-font .glabel { padding-right: 21px; }
.g-align { width: 238px; padding-left: 4px; }
.g-align .glabel { padding-right: 20px; }
.g-num { width: 140px; padding-left: 5px; }
.g-num .glabel { padding-right: 20px; }
.g-style { width: 464px; }
.g-cells { width: 135px; padding-left: 4px; }
.g-edit { width: 229px; padding-left: 5px; }
.g-edit .glabel { margin-left: -5px; }
.g-inv { width: 55px; }
.g-save { width: 62px; }

.big { display: flex; flex-direction: column; align-items: center; padding-top: 4px; flex: none; }
.bigicon { height: 30px; margin-bottom: 2px; flex: none; display: block; }
.biglabel { line-height: 15px; text-align: center; color: #444; white-space: nowrap; }
.bigcaret { height: 16px; display: flex; align-items: center; }
.inl { margin-left: 4px; vertical-align: 2px; }
.big-paste { width: 50px; }
.big-cf { width: 59px; margin-left: 1px; }
.big-tf { width: 58px; }
.big-c { width: 42px; }
.big-c .bigicon { margin-bottom: 1px; }
.big-sort { width: 68px; }
.big-find { width: 62px; }
.big-inv { width: 54px; }
.big-save { width: 61px; }

.smalls { display: flex; flex-direction: column; margin-top: -1px; }
.smalls-edit { width: 87px; }
.sm { height: 23px; display: flex; align-items: center; white-space: nowrap; color: #444; }
.sm span:not(.caret) { padding-bottom: 2px; }
.smi { width: 18px; margin-right: 1px; flex: none; }
.smi2 { width: 18px; margin-right: 3px; flex: none; }
.caret-sm { margin-left: 9px; }
.caret-e1 { margin-left: 11px; }
.caret-e2 { margin-left: 5px; }

.rows { flex-direction: column; padding-top: 7px; gap: 8px; }
.row { display: flex; height: 23px; align-items: center; flex: none; }
.row-tight { margin-left: -1px; }
.raise { padding-bottom: 2px; }
.combo { height: 23px; background: #fff; border: 1px solid #c6c6c6; display: flex; align-items: center; justify-content: space-between; padding: 0 6px 2px 2px; color: #333; white-space: nowrap; font-size: 13px; }
.combo .caret { margin-top: 2px; }
.c-font { width: 158px; }
.c-size { width: 40px; margin-left: -1px; padding-left: 3px; font-family: "Liberation Sans", sans-serif; font-size: 13px; }
.c-num { width: 131px; }
.ic { width: 22px; height: 23px; display: flex; align-items: center; justify-content: center; flex: none; }
.ic-on { background: #c6c6c6; }
.ic2 { width: 44px; display: flex; align-items: center; gap: 3px; padding-left: 3px; flex: none; }
.car { width: 12px; display: flex; justify-content: center; flex: none; }
.sep { width: 9px; height: 23px; flex: none; display: flex; justify-content: center; background: linear-gradient(#d2d2d2, #d2d2d2) center / 1px 100% no-repeat; }
.fmt { font-family: "Liberation Sans", sans-serif; font-size: 13px; color: #555; }
.fmt-b { font-weight: 700; }
.fmt-i { font-style: italic; font-family: "Liberation Serif", serif; font-weight: 700; }
.fmt-u { text-decoration: underline; font-weight: 700; }
.icontext { font: 400 17px "Liberation Sans", sans-serif; fill: #555; }
.icontext-s { font: 400 14px "Liberation Sans", sans-serif; fill: #555; }
.icontext-a { font: 700 13px "Liberation Sans", sans-serif; fill: #555; }
.wen { flex-direction: column; line-height: 1; }
.wen i { font: 10px "Liberation Sans", sans-serif; color: #444; }
.wen b { font: 700 9px "Noto Sans CJK SC", sans-serif; color: #2f75b5; }
.down4 { margin-top: 7px; }
.wrap-btn { width: 77px; height: 23px; background: #c6c6c6; display: flex; align-items: center; gap: 3px; padding-left: 3px; color: #444; white-space: nowrap; flex: none; }
.merge { display: flex; align-items: center; padding-left: 4px; white-space: nowrap; flex: none; }
.merge-t { margin: 0 6px 0 3px; width: 60px; }
.pct { font: 16px "Liberation Sans", sans-serif; color: #555; }
.comma { font-weight: 700; padding-bottom: 6px; }
.decs { position: relative; font: 9px "Liberation Sans", sans-serif; color: #333; }
.decs i { position: absolute; line-height: 9px; }
.dec1 { left: 11px; top: 3px; }
.dec2 { left: 7px; top: 12px; }
.dec3 { left: 7px; top: 3px; }
.dec4 { left: 11px; top: 12px; }

/* gallery */
.gallery { width: 335px; height: 62px; margin: 2px 0 0 2px; border: 1px solid #c6c6c6; background: #fff; display: flex; justify-content: space-between; }
.gcells { display: grid; grid-template-columns: repeat(3, 100px); grid-auto-rows: 22px; column-gap: 6px; row-gap: 6px; padding: 5px 0 0 3px; }
.st { display: flex; align-items: center; padding: 0 0 2px 5px; font-size: 14px; white-space: nowrap; font-family: "Liberation Sans", "Noto Sans CJK SC", sans-serif; }
.st-pink { background: #ff99cc; color: #a0149a; }
.st-lgreen { background: #ccffcc; color: #1e9a14; }
.st-plain { color: #222; }
.st-norm { background: #fff; color: #222; box-shadow: 0 0 0 3px #c6c6c6; }
.st-bad { background: #ffc7ce; color: #b4141e; }
.st-good { background: #c6efce; color: #1f7a20; }
.gscroll { width: 14px; display: flex; flex-direction: column; flex: none; }
.gs { height: 20px; flex: 1; display: flex; align-items: center; justify-content: center; border-left: 1px solid #c6c6c6; border-bottom: 1px solid #c6c6c6; background: #fff; }
.gs:last-child { border-bottom: 0; }
.gs-dim { background: #e6e6e6; }
.gs-more { flex-direction: column; gap: 1px; }
.gs-more::before { content: ""; width: 7px; height: 1px; background: #666; }
.up { display: block; width: 0; height: 0; border-left: 4px solid transparent; border-right: 4px solid transparent; border-bottom: 5px solid #b8b8b8; }

.neq { font: 11px "Liberation Sans", sans-serif; text-anchor: middle; fill: #222; }
.az { font: 700 15px "Liberation Sans", sans-serif; }
.az-a { fill: #4a86c0; }
.az-z { fill: #8e5fb0; }
.collapse { align-self: flex-end; margin: 0 0 7px 17px; }

/* formula bar */
.fbar { height: 48px; flex: none; background: #e6e6e6; display: flex; padding: 10px 0 10px 5px; color: #444; }
.namebox { width: 124px; height: 28px; background: #fff; border: 1px solid #c6c6c6; display: flex; align-items: center; justify-content: space-between; padding: 0 6px 0 6px; font: 14px "Liberation Sans", sans-serif; color: #444; }
.dots { width: 30px; display: flex; flex-direction: column; gap: 2px; align-items: center; justify-content: center; }
.dots i { width: 2px; height: 2px; background: #aaa; }
.fxbox { width: 110px; height: 28px; background: #fff; border: 1px solid #c6c6c6; display: flex; align-items: center; justify-content: space-around; padding: 0 6px; }
.fx { font: italic 700 14px "Liberation Serif", serif; color: #666; }
.fx sub { font-size: 10px; vertical-align: -1px; }
.finput { flex: 1; height: 28px; margin-left: 3px; background: #fff; border: 1px solid #c6c6c6; border-right: 0; display: flex; align-items: center; justify-content: space-between; padding: 0 4px 0 10px; font: 14px "Liberation Sans", sans-serif; color: #444; }

/* sheet */
.sheet { position: relative; height: 786px; flex: none; display: flex; background: #e6e6e6; }
.gridwrap { width: 1706px; height: 786px; overflow: hidden; flex: none; }
.grid { table-layout: fixed; width: 1706px; border-collapse: separate; border-spacing: 0; font: 14.4px "Liberation Sans", "Noto Sans CJK SC", sans-serif; color: #222; background: #fff; }
.c-rh { width: 29px; }
.c94 { width: 94px; }
.c106 { width: 106px; }
.c113 { width: 113px; }
.c205 { width: 205px; }
.c-end { width: 19px; }
.grid th { background: #e6e6e6; font-weight: 400; padding: 0; color: #333; }
.grid thead th { height: 19px; padding-top: 3px; border-right: 1px solid #b4b4b4; border-bottom: 2px solid #a6a6a6; line-height: 14px; font-size: 14px; }
.grid thead th.corner { padding-top: 0; border-right: 2px solid #a6a6a6; vertical-align: bottom; text-align: center; line-height: 0; }
.grid thead th:last-child { border-right: 2px solid #a6a6a6; border-bottom: 2px solid #a6a6a6; }
.grid tbody th { height: 26px; border-right: 2px solid #a6a6a6; border-bottom: 1px solid #c4c4c4; vertical-align: bottom; line-height: 18px; font-size: 14px; text-align: center; }
.grid td { height: 26px; padding: 1px 0 0; border-right: 1px solid #d4d4d4; border-bottom: 1px solid #d4d4d4; text-align: center; white-space: nowrap; overflow: hidden; line-height: 20px; }
.grid td:last-child { border-right: 2px solid #a6a6a6; }
.grid tbody tr:nth-child(n+3) td:nth-child(3),
.grid tbody tr:nth-child(n+3) td:nth-child(5),
.grid tbody tr:nth-child(n+3) td:nth-child(6),
.grid tbody tr:nth-child(n+3) td:nth-child(8),
.grid tbody tr:nth-child(n+3) td:nth-child(9),
.grid tbody tr:nth-child(n+3) td:nth-child(10),
.grid tbody tr:nth-child(n+3) td:nth-child(12),
.grid tbody tr:nth-child(-n+2) td { font-size: 15.3px; }
.grid .date { letter-spacing: 0.35px; }
.grid thead th.col-on { background: #cfcfcf; border-bottom-color: #217346; color: #217346; }
.grid tbody th.row-on { background: #cfcfcf; border-right-color: #217346; color: #217346; }
.grid td.sel { position: relative; overflow: visible; outline: 2px solid #217346; outline-offset: -1px; }
.grid td.sel::after { content: ""; position: absolute; right: -4px; bottom: -4px; width: 7px; height: 7px; background: #217346; border: 1px solid #fff; }

.vscroll { width: 12px; margin-left: 3px; display: flex; flex-direction: column; flex: none; background: #dcdcdc; padding-top: 2px; }
.vbtn { height: 15px; flex: none; display: flex; align-items: center; justify-content: center; background: #fff; border: 1px solid #a6a6a6; border-right: 0; border-bottom-color: #c6c6c6; }
.vbtn-b { background: #f1f1f1; border: 0; border-left: 1px solid #c6c6c6; }
.vbtn .up { border-bottom-color: #666; }
.vthumb { height: 210px; flex: none; background: #fff; border: 1px solid #a6a6a6; border-right: 0; border-top: 0; }
.vtrack { flex: 1; }

.stamp { position: absolute; left: 1352px; top: 714px; }
.stamp-t { font: 700 7.8px "Noto Sans CJK SC", sans-serif; fill: #e8323c; }
.cursor { position: absolute; left: 563px; top: 215px; }

/* sheet tabs */
.sheetbar { height: 28px; flex: none; background: #e6e6e6; border-top: 1px solid #a6a6a6; border-bottom: 1px solid #c6c6c6; display: flex; font-size: 13px; color: #555; }
.nav { width: 100px; display: flex; align-items: center; gap: 22px; padding-left: 27px; flex: none; }
.tab { height: 20px; margin-top: 3px; padding: 0 11.5px 6px; display: flex; align-items: center; border-left: 1px solid #a6a6a6; white-space: nowrap; flex: none; }
.tab-on { height: 24px; margin-top: 0; padding: 0 11.5px 4px; background: #fff; color: #217346; border-left: 1px solid #a6a6a6; border-right: 1px solid #a6a6a6; border-bottom: 2px solid #217346; }
.tab-on + .tab { border-left: 0; }
.tab-blue { height: 22px; margin: 2px 0 0 3px; border-left: 0; padding: 0 10px 4px; background: #bdd7ee; color: #222; width: 111px; justify-content: center; }
.tab-orange { height: 22px; margin: 2px 2px 0 5px; border-left: 0; background: #f4b183; color: #222; padding: 0 0 4px; width: 58px; justify-content: center; }
.tab-s { width: 69px; justify-content: center; padding: 0 0 6px; font-family: "Liberation Sans", sans-serif; }
.tab-s:last-of-type { border-right: 1px solid #a6a6a6; }
.addsheet { margin: 6px 0 0 33px; flex: none; }
.hscroll { margin-left: auto; display: flex; align-items: center; width: 556px; flex: none; height: 26px; }
.dots-h { width: 24px; }
.hbtn { width: 15px; height: 15px; display: flex; align-items: center; justify-content: center; background: #f1f1f1; border: 1px solid #a6a6a6; flex: none; margin-right: 2px; }
.hbtn:last-child { margin-right: 16px; margin-left: 0; }
.hthumb { width: 17px; height: 15px; background: #fff; border: 1px solid #a6a6a6; flex: none; margin-left: -2px; }
.htrack { flex: 1; height: 15px; background: #d9d9d9; }
.left { width: 0; height: 0; border-top: 4px solid transparent; border-bottom: 4px solid transparent; border-right: 4px solid #555; }
.right { width: 0; height: 0; border-top: 4px solid transparent; border-bottom: 4px solid transparent; border-left: 4px solid #555; }

/* status */
.status { flex: 1; background: #f1f1f1; display: flex; align-items: center; color: #555; font-size: 12px; padding-left: 7px; }
.st-txt { margin-right: 19px; white-space: nowrap; padding-bottom: 2px; }
.st-ico { margin-left: 5px; }
.st-right { margin-left: auto; display: flex; align-items: center; height: 100%; }
.view { width: 38px; height: 18px; display: flex; align-items: center; justify-content: center; flex: none; }
.view-on { background: #c6c6c6; }
.zminus { width: 6px; height: 2px; background: #555; margin-left: 4px; }
.slider { position: relative; width: 100px; height: 1px; background: #999; margin: 0 5px; }
.sthumb { position: absolute; left: 48px; top: -5px; width: 4px; height: 11px; background: #555; }
.zplus { width: 8px; height: 8px; background: linear-gradient(#555, #555) center / 8px 2px no-repeat, linear-gradient(#555, #555) center / 2px 8px no-repeat; }
.zpct { width: 61px; text-align: center; font: 12px "Liberation Sans", sans-serif; color: #555; padding-right: 1px; }

/* overlays */
.ime { position: absolute; left: 947px; top: 1011px; width: 60px; height: 30px; background: #fff; border-radius: 6px; box-shadow: 0 0 3px rgba(0,0,0,.45); display: flex; align-items: flex-start; padding-top: 4px; justify-content: center; gap: 3px; font: 13px "Liberation Sans", "Noto Sans CJK SC", sans-serif; color: #333; }
.ime svg { margin-top: 3px; }
.watermark { position: absolute; left: 1562px; top: 986px; display: flex; pointer-events: none; }
.wm-t { display: flex; flex-direction: column; margin-left: -3px; }
.wm-t b { font: 700 21px/23px "Noto Sans CJK SC", sans-serif; color: #2f80c4; white-space: nowrap; opacity: .9; }
.wm-t span { font: 15px/15px "Liberation Sans", sans-serif; color: #55bb70; margin: 4px 0 0 6px; }
```
